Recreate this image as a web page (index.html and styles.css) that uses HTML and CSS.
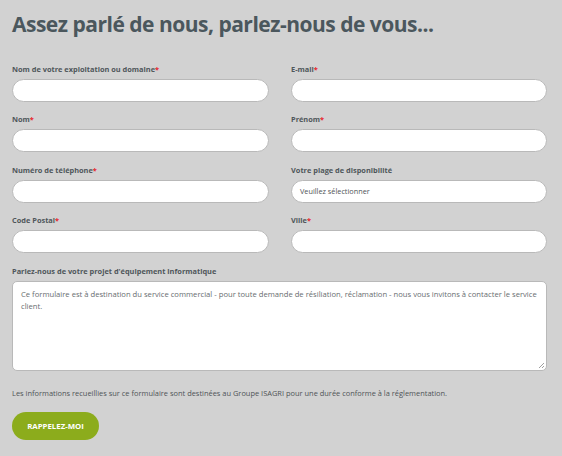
FILE: index.html
```
<!DOCTYPE html>
<html lang="fr">
<head>
<meta charset="utf-8">
<link rel="stylesheet" href="styles.css">
</head>
<body>
<div class="page">
  <h1 class="title">Assez parlé de nous, parlez-nous de vous...</h1>
  <form class="form">
    <div class="grid">
      <div class="field">
        <label class="label">Nom de votre exploitation ou domaine<span class="req">*</span></label>
        <div class="input"></div>
      </div>
      <div class="field">
        <label class="label">E-mail<span class="req">*</span></label>
        <div class="input"></div>
      </div>
      <div class="field">
        <label class="label">Nom<span class="req">*</span></label>
        <div class="input"></div>
      </div>
      <div class="field">
        <label class="label">Prénom<span class="req">*</span></label>
        <div class="input"></div>
      </div>
      <div class="field">
        <label class="label">Numéro de téléphone<span class="req">*</span></label>
        <div class="input"></div>
      </div>
      <div class="field">
        <label class="label">Votre plage de disponibilité</label>
        <div class="input select">Veuillez sélectionner</div>
      </div>
      <div class="field">
        <label class="label">Code Postal<span class="req">*</span></label>
        <div class="input"></div>
      </div>
      <div class="field">
        <label class="label">Ville<span class="req">*</span></label>
        <div class="input"></div>
      </div>
    </div>
    <div class="field wide">
      <label class="label">Parlez-nous de votre projet d'équipement informatique</label>
      <div class="textarea">Ce formulaire est à destination du service commercial - pour toute demande de résiliation, réclamation - nous vous invitons à contacter le service client.
        <svg class="grip" width="8" height="8" viewBox="0 0 8 8"><path d="M7 2L2 7M7 5L5 7" stroke="#888" stroke-width="0.8"/></svg>
      </div>
    </div>
    <p class="notice">Les informations recueillies sur ce formulaire sont destinées au Groupe ISAGRI pour une durée conforme à la réglementation.</p>
    <button type="button" class="btn">RAPPELEZ-MOI</button>
  </form>
</div>
</body>
</html>
```
FILE: styles.css
```
html, body {
  margin: 0;
  padding: 0;
  background: #d2d2d2;
}
.page {
  width: 535px;
  padding: 0 15px 0 12px;
  font-family: "Open Sans", sans-serif;
  color: #4b555b;
}
.title {
  margin: 0;
  padding-top: 9px;
  height: 64px;
  box-sizing: border-box;
  font-size: 21px;
  line-height: 30px;
  font-weight: 700;
  letter-spacing: -0.5px;
  color: #4b575d;
}
.grid {
  display: grid;
  grid-template-columns: 257px 256px;
  column-gap: 22px;
  row-gap: 12.3px;
}
.field {
  display: flex;
  flex-direction: column;
}
.label {
  font-size: 7.4px;
  font-weight: 700;
  line-height: 10px;
  height: 10px;
  margin-bottom: 5px;
  color: #4f565a;
}
.req {
  color: #e8242b;
}
.input {
  height: 23px;
  box-sizing: border-box;
  background: #fff;
  border: 1px solid #b9b9b9;
  border-radius: 12px;
}
.select {
  font-size: 7.3px;
  line-height: 21px;
  padding-left: 8px;
  color: #4f5457;
}
.wide {
  margin-top: 13px;
}
.textarea {
  position: relative;
  height: 90px;
  box-sizing: border-box;
  background: #fff;
  border: 1px solid #b9b9b9;
  border-radius: 5px;
  padding: 6px 8px;
  font-size: 7.65px;
  line-height: 12px;
  color: #686d70;
}
.grip {
  position: absolute;
  right: 1px;
  bottom: 1px;
}
.notice {
  margin: 17px 0 0;
  font-size: 7.45px;
  line-height: 10px;
  color: #4f5457;
}
.btn {
  display: block;
  margin-top: 14px;
  width: 87px;
  height: 28px;
  border: 0;
  border-radius: 14px;
  background: #8cac1c;
  color: #fff;
  font-family: "Open Sans", sans-serif;
  font-weight: 700;
  font-size: 7.8px;
  padding: 0;
}
```
